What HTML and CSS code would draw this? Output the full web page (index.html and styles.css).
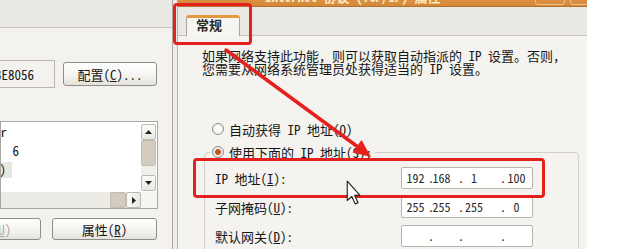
FILE: index.html
```html
<!DOCTYPE html>
<html lang="zh-CN">
<head>
<meta charset="utf-8">
<title>本地连接 属性</title>
<link rel="stylesheet" href="styles.css">
</head>
<body>
<div class="screen">
  <div class="left">
    <div class="left-top"></div>
    <div class="left-body">
      <div class="adapter-row">
        <div class="textbox"><span>RTL80273E8056</span></div>
        <div class="btn cfg">配置(<u>C</u>)...</div>
      </div>
      <div class="listbox">
        <div class="list-main">
          <div class="items">
            <div class="item item1"><span>Network Monitor Driver</span></div>
            <div class="item item2"><span>Internet 协议版本&nbsp;&nbsp;6</span></div>
            <div class="item item3"><span class="sel">Internet 协议 (TCP/IP)</span></div>
          </div>
          <div class="vscroll">
            <div class="sbtn"><svg width="7" height="4" viewBox="0 0 7 4"><path d="M0 4 L3.5 0 L7 4 Z" fill="#222"/></svg></div>
            <div class="vthumb"></div>
            <div class="vtrack"></div>
            <div class="sbtn"><svg width="7" height="4" viewBox="0 0 7 4"><path d="M0 0 L3.5 4 L7 0 Z" fill="#222"/></svg></div>
          </div>
        </div>
        <div class="hscroll">
          <div class="htrack"></div>
          <div class="hthumb"></div>
          <div class="hbtn"><svg width="4" height="7" viewBox="0 0 4 7"><path d="M0 0 L4 3.5 L0 7 Z" fill="#222"/></svg></div>
          <div class="corner"></div>
        </div>
      </div>
      <div class="btn-row">
        <div class="btn uninstall">卸载(<u>U</u>)</div>
        <div class="btn props">属性(<u>R</u>)</div>
      </div>
    </div>
  </div>
  <div class="sep"></div>
  <div class="right">
    <div class="titlebar">
      <span class="title">Internet 协议 (TCP/IP) 属性</span>
      <span class="capbtn help"></span>
      <span class="capbtn close"></span>
    </div>
    <div class="tabstrip">
      <div class="tab">常规</div>
    </div>
    <div class="panel">
      <p class="desc">如果网络支持此功能，则可以获取自动指派的 IP 设置。否则，<br>您需要从网络系统管理员处获得适当的 IP 设置。</p>
      <div class="radio-row"><span class="radio"></span><span>自动获得 IP 地址(<u>O</u>)</span></div>
      <fieldset class="group">
        <legend class="radio-row legend"><span class="radio checked"></span><span>使用下面的 IP 地址(<u>S</u>):</span></legend>
        <div class="field-row">
          <span class="label">IP 地址(<u>I</u>):</span>
          <div class="ip"><span class="s">192</span><span class="d">.</span><span class="s">168</span><span class="d r">.</span><span class="s">1</span><span class="d r">.</span><span class="s">100</span></div>
        </div>
        <div class="field-row">
          <span class="label">子网掩码(<u>U</u>):</span>
          <div class="ip"><span class="s">255</span><span class="d">.</span><span class="s">255</span><span class="d r">.</span><span class="s">255</span><span class="d r">.</span><span class="s">0</span></div>
        </div>
        <div class="field-row">
          <span class="label">默认网关(<u>D</u>):</span>
          <div class="ip"><span class="s"></span><span class="d">.</span><span class="s"></span><span class="d r">.</span><span class="s"></span><span class="d r">.</span><span class="s"></span></div>
        </div>
      </fieldset>
    </div>
  </div>
  <div class="blank"></div>

  <div class="mark mark-tab"></div>
  <div class="mark mark-ip"></div>
  <svg class="arrow" width="620" height="249" viewBox="0 0 620 249">
    <line x1="226" y1="50" x2="358" y2="147" stroke="#e5211d" stroke-width="3.5" stroke-linecap="round"/>
    <polygon points="371,157 352.5,152.5 361.5,140" fill="#e5211d"/>
  </svg>
  <svg class="cursor" width="15" height="25" viewBox="0 0 13 22">
    <path d="M1 1 L1 18 L5 14.5 L8 21 L10.5 20 L7.5 13.5 L12.2 13.5 Z" fill="#fff" stroke="#222" stroke-width="1" stroke-linejoin="round"/>
  </svg>
</div>
</body>
</html>
```

FILE: styles.css
```css
* { box-sizing: border-box; }
html, body { margin: 0; padding: 0; }
body {
  width: 620px;
  height: 249px;
  overflow: hidden;
  background: #ffffff;
  color: #161616;
  font-family: "Noto Sans Mono CJK SC", "Noto Sans CJK SC", sans-serif;
  font-size: 13px;
}
u { text-decoration: underline; text-underline-offset: 1px; }

.screen {
  position: relative;
  display: flex;
  width: 620px;
  height: 249px;
  overflow: hidden;
}

/* ---------- left window ---------- */
.left {
  width: 172px;
  flex: none;
  background: #f4f2ee;
  display: flex;
  flex-direction: column;
  overflow: hidden;
}
.left-top {
  height: 28px;
  flex: none;
  background: #ebe9e4;
  border-bottom: 1px solid #c9c6bf;
}
.left-body { padding-top: 32px; }
.adapter-row {
  display: flex;
  align-items: center;
  height: 28px;
}
.textbox {
  width: 55px;
  height: 28px;
  flex: none;
  display: flex;
  justify-content: flex-end;
  align-items: center;
  padding-right: 20px;
  border: 1px solid #b9b6b0;
  border-left: none;
  background: #f4f2ee;
  overflow: hidden;
  white-space: nowrap;
}
.btn {
  height: 24px;
  flex: none;
  display: flex;
  align-items: center;
  justify-content: center;
  white-space: nowrap;
  border: 1px solid #8f8d88;
  border-radius: 3px;
  background: linear-gradient(#ffffff, #f5f4f1 55%, #e4e2dc);
}
.cfg { width: 94px; margin-left: 8px; }

.listbox {
  margin-top: 33px;
  width: 158px;
  border: 1px solid #a9a7a1;
  background: #ffffff;
}
.list-main { display: flex; height: 70px; }
.items {
  width: 140px;
  flex: none;
  overflow: hidden;
  display: flex;
  flex-direction: column;
}
.item {
  height: 19px;
  flex: none;
  display: flex;
  align-items: center;
  justify-content: flex-end;
  white-space: nowrap;
}
.item1 { padding-right: 134px; }
.item2 { padding-right: 122px; }
.item3 { padding-right: 129px; }
.sel {
  background: #e9e6e0;
  padding-right: 6px;
  line-height: 16px;
}
.vscroll {
  width: 16px;
  flex: none;
  display: flex;
  flex-direction: column;
  padding: 2px 1px 1px 0;
}
.sbtn {
  height: 16px;
  flex: none;
  display: flex;
  align-items: center;
  justify-content: center;
  border: 1px solid #bdbab2;
  border-radius: 2px;
  background: linear-gradient(#fbfbf9, #e9e7e1);
}
.vthumb {
  height: 26px;
  flex: none;
  background: #d3ccbe;
  border: 1px solid #c4bdae;
  border-radius: 2px;
}
.vtrack { flex: 1; background: #f1efea; }
.hscroll {
  height: 16px;
  display: flex;
  background: #efede8;
}
.htrack { width: 109px; flex: none; background: #eceae5; }
.hthumb {
  width: 16px;
  flex: none;
  background: #d3ccbe;
  border: 1px solid #c4bdae;
  border-radius: 2px;
}
.hbtn {
  width: 15px;
  flex: none;
  display: flex;
  align-items: center;
  justify-content: center;
  border: 1px solid #bdbab2;
  border-radius: 2px;
  background: linear-gradient(90deg, #fbfbf9, #e9e7e1);
}
.corner { flex: 1; background: #f6f5f2; }

.btn-row {
  display: flex;
  gap: 11px;
  margin-top: 9px;
}
.btn-row .btn { height: 22px; width: 105px; }
.uninstall { margin-left: -64px; color: #aeaba3; }

/* ---------- separator ---------- */
.sep {
  width: 6px;
  flex: none;
  background: #efede8;
  border-left: 1px solid #a9a69f;
  border-right: 1px solid #b3b0a9;
}

/* ---------- right window ---------- */
.right {
  width: 409px;
  flex: none;
  display: flex;
  flex-direction: column;
  background: #f5f3ef;
}
.titlebar {
  height: 7px;
  flex: none;
  display: flex;
  align-items: flex-end;
  padding-left: 87px;
  overflow: hidden;
  background: linear-gradient(#dc903f, #d3883a);
  border-bottom: 1px solid #b5722e;
}
.title {
  flex: none;
  height: 16px;
  line-height: 16px;
  margin-bottom: 1px;
  color: #fbe9c4;
  font-size: 13px;
  font-weight: bold;
  white-space: nowrap;
}
.capbtn {
  flex: none;
  height: 14px;
  border: 1px solid #f0c48c;
  border-radius: 3px;
  margin-bottom: 1px;
}
.help { width: 30px; margin-left: auto; }
.close { width: 21px; margin-left: 5px; margin-right: -4px; }

.tabstrip {
  height: 29px;
  flex: none;
  display: flex;
  align-items: flex-end;
  padding-left: 8px;
  background: #ebe9e4;
  border-bottom: 1px solid #c6c3bc;
}
.tab {
  width: 54px;
  height: 21px;
  margin-bottom: -1px;
  padding-left: 9px;
  line-height: 14px;
  font-weight: bold;
  color: #2a2a2a;
  background: #f7f5f1;
  border: 1px solid #aaa79f;
  border-top: 3px solid #e39a3c;
  border-bottom: none;
  border-radius: 3px 3px 0 0;
}

.panel { flex: 1; }
.desc {
  margin: 0;
  padding: 13px 0 0 24px;
  line-height: 13px;
  white-space: nowrap;
}
.radio-row {
  display: flex;
  align-items: center;
  height: 14px;
  margin: 47px 0 0 34px;
  white-space: nowrap;
}
.radio {
  width: 12px;
  height: 12px;
  flex: none;
  margin-right: 5px;
  border: 1px solid #8f8d86;
  border-radius: 50%;
  background: radial-gradient(circle at 50% 50%, #ffffff 30%, #e4e1da 100%);
}
.radio.checked {
  background: radial-gradient(circle at 50% 50%, #bf5326 0, #c45a2c 2.6px, #f4f2ee 3.4px, #e4e1da 100%);
}

.group {
  margin: 9px 0 0 26px;
  width: 375px;
  min-inline-size: 0;
  padding: 8px 0 0 10px;
  border: 1px solid #d4d0c8;
  border-radius: 4px;
}
.legend {
  margin: 0 0 0 -5px;
  padding: 0 3px 0 2px;
}
.field-row {
  display: flex;
  align-items: center;
  height: 22px;
  margin-bottom: 7px;
  white-space: nowrap;
}
.label { width: 186px; flex: none; }
.ip {
  width: 132px;
  height: 22px;
  flex: none;
  display: grid;
  grid-template-columns: 25px 4px 19px 13px 20px 22px 21px;
  align-items: center;
  padding-left: 1px;
  border: 1px solid #b7b5af;
  border-radius: 2px;
  background: #ffffff;
  font-size: 12px;
  line-height: 14px;
  color: #2a2a2a;
}
.ip .s { text-align: center; white-space: nowrap; }
.ip .d { text-align: left; white-space: nowrap; }
.ip .d.r { text-align: right; }

.blank { flex: 1; background: #ffffff; }

/* ---------- annotations ---------- */
.mark {
  position: absolute;
  border: 3px solid #e5211d;
  border-radius: 4px;
}
.mark-tab { left: 173px; top: 3px; width: 79px; height: 42px; }
.mark-ip { left: 193px; top: 158px; width: 352px; height: 40px; }
.arrow {
  position: absolute;
  left: 0;
  top: 0;
}
.cursor {
  position: absolute;
  left: 346px;
  top: 180px;
}
```
